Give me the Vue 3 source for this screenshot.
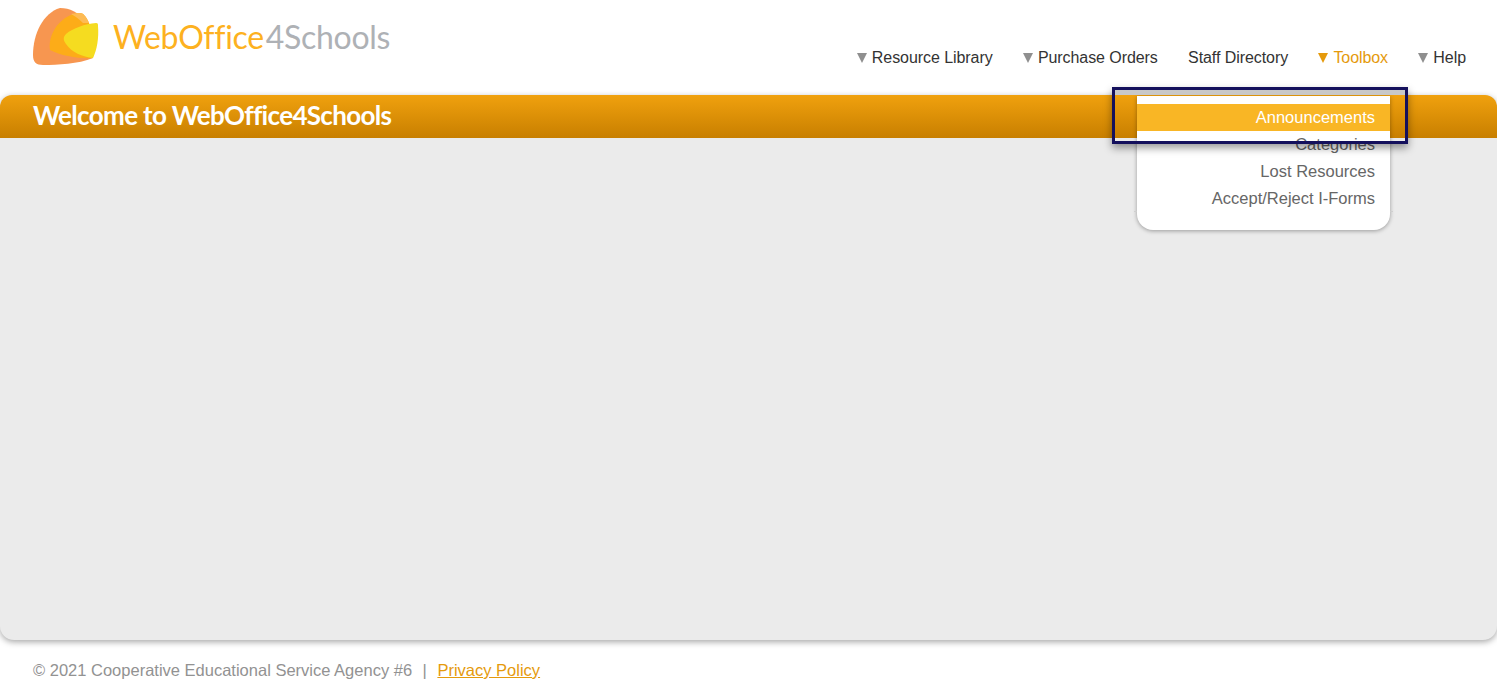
<script setup>
const navItems = [
  { label: 'Resource Library', arrow: true },
  { label: 'Purchase Orders', arrow: true },
  { label: 'Staff Directory', arrow: false },
  { label: 'Toolbox', arrow: true, active: true },
  { label: 'Help', arrow: true },
];
const toolboxItems = ['Announcements', 'Categories', 'Lost Resources', 'Accept/Reject I-Forms'];
</script>

<template>
  <div class="page">
    <header class="top">
      <div class="brand">
        <svg class="mark" width="66" height="58" viewBox="0 0 66 58">
          <path d="M27 0 C37 0 45 4 52 13 L60 50 C45 56 25 57 10 57 C3 57 0 54 0 47 C0 26 10 5 27 0 Z" fill="#f79650" />
          <path d="M47 5 C50 5 53 8 56 15 L62 30 L60 50 C48 51 28 48 17 42 C15 28 24 12 40 6 C42 5 45 5 47 5 Z" fill="#fdac18" />
          <path d="M38 6 C42 5 45 5 47 5 C50 5 53 8 56 15 L50 15 C46 11 42 8 38 6 Z" fill="#fdbb55" />
          <path d="M63 15 C65 15 65 16 65 18 C66 30 64 42 60 50 C50 49 38 44 33 36 C30 32 30 29 33 26 C40 20 52 16 63 15 Z" fill="#f5dc20" />
        </svg>
        <span class="wordmark"><span class="word-a">WebOffice</span><span class="word-b">4Schools</span></span>
      </div>
      <nav class="nav">
        <a v-for="item in navItems" :key="item.label" class="nav-item" :class="{ active: item.active }">
          <i v-if="item.arrow" class="arrow"></i>{{ item.label }}
        </a>
      </nav>
    </header>

    <main class="panel">
      <div class="panel-head"><h1>Welcome to WebOffice4Schools</h1></div>
    </main>

    <footer class="foot">
      © 2021 Cooperative Educational Service Agency #6<span class="sep">|</span><a class="privacy">Privacy Policy</a>
    </footer>

    <ul class="menu">
      <li v-for="(item, i) in toolboxItems" :key="item" :class="{ hot: i === 0 }">{{ item }}</li>
    </ul>
    <div class="callout"></div>
  </div>
</template>

<style>
html, body { margin: 0; background: #fff; overflow: hidden; }
</style>

<style scoped>
.page {
  position: relative;
  height: 688px;
  font-family: "Liberation Sans", Arial, sans-serif;
  font-size: 16px;
  color: #333;
}
.top {
  height: 95px;
  display: flex;
  justify-content: space-between;
  box-sizing: border-box;
  padding: 8px 31px 0 33px;
}
.brand { display: flex; align-items: flex-start; }
.mark { display: block; }
.wordmark {
  font-family: Lato, sans-serif;
  font-size: 32px;
  line-height: 58px;
  margin-left: 14px;
  letter-spacing: -0.3px;
}
.word-a { color: #fdb120; }
.word-b { color: #aeb1b5; margin-left: 2px; }
.nav { display: flex; gap: 30.3px; padding-top: 40px; }
.nav-item { line-height: 20px; white-space: nowrap; letter-spacing: -0.07px; }
.nav-item.active { color: #e59a0c; }
.arrow {
  display: inline-block;
  width: 0;
  height: 0;
  margin-right: 5px;
  border-left: 5.5px solid transparent;
  border-right: 5.5px solid transparent;
  border-top: 10px solid #8f8f8f;
}
.nav-item.active .arrow { border-top-color: #e59a0c; }

.panel {
  height: 545px;
  background: #ebebeb;
  border-radius: 12px 12px 14px 14px;
  box-shadow: 0 2px 6px rgba(0, 0, 0, 0.35);
  overflow: hidden;
}
.panel-head {
  height: 43px;
  padding-left: 33px;
  background: linear-gradient(#f0a10e, #c87f00);
}
.panel-head h1 {
  margin: 0;
  font-family: Lato, sans-serif;
  font-size: 26px;
  font-weight: 700;
  line-height: 40px;
  color: #fff;
  letter-spacing: -0.66px;
}
.foot {
  padding: 20px 0 0 33px;
  font-size: 16.5px;
  line-height: 20px;
  color: #929292;
}
.sep { margin: 0 10.5px; }
.privacy { color: #e59a0c; text-decoration: underline; }

.menu {
  position: absolute;
  left: 1137px;
  top: 96px;
  width: 253px;
  height: 134px;
  box-sizing: border-box;
  margin: 0;
  padding: 8px 0 0;
  list-style: none;
  background: #fff;
  border-radius: 0 0 16px 16px;
  box-shadow: 0 1px 4px rgba(0, 0, 0, 0.35);
  font-size: 16.5px;
}
/* faint rule poking out either side of the dropdown */
.menu::before,
.menu::after {
  content: "";
  position: absolute;
  top: 115px;
  width: 3px;
  height: 1px;
  background: #cfcfcf;
}
.menu::before { left: -3px; }
.menu::after { right: -3px; }
.menu li {
  height: 27px;
  line-height: 27px;
  padding-right: 15px;
  text-align: right;
  color: #666;
}
.menu li.hot { background: #f9b625; color: #fff; }
.callout {
  position: absolute;
  left: 1112px;
  top: 87px;
  width: 296px;
  height: 57px;
  box-sizing: border-box;
  border: 3px solid #14105c;
  box-shadow: 0 4px 8px rgba(0, 0, 0, 0.4), inset 0 5px 0 #c8c8c8;
}
</style>
